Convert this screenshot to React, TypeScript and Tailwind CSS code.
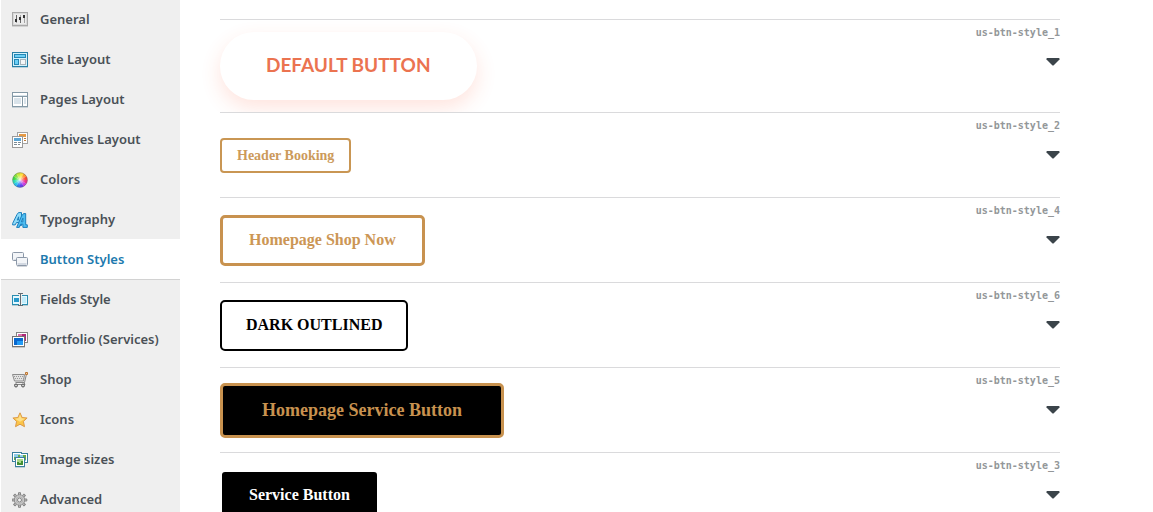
import type { ReactNode } from 'react';
import { useState } from 'react';
import clsx from 'clsx';

interface Section {
  id: string;
  title: string;
  icon: ReactNode;
}

interface ButtonStyle {
  id: number;
  label: string;
  className: string;
}

const cogTeeth = [0, 45, 90, 135, 180, 225, 270, 315];

const wheelColors = [
  '#ffe23b', '#ff9a2e', '#ff4a3a', '#f0308a', '#c63be0', '#6a3df0',
  '#2f7df5', '#25c4ee', '#2fe0b0', '#3fdc4a', '#86e03a', '#c8e838',
];

function wheelSlice(i: number) {
  const a = ((i * 30 - 90) * Math.PI) / 180;
  const b = ((i * 30 - 59) * Math.PI) / 180;
  return `M8 8 L${8 + 7.5 * Math.cos(a)} ${8 + 7.5 * Math.sin(a)} A7.5 7.5 0 0 1 ${8 + 7.5 * Math.cos(b)} ${8 + 7.5 * Math.sin(b)} Z`;
}

const sections: Section[] = [
  {
    id: 'general',
    title: 'General',
    icon: (
      <g shapeRendering="crispEdges">
        <path fill="#a9a9a9" d="M0 0h16v14H0z" />
        <path fill="#d9d9d9" d="M1 1h14v12H1z" />
        <path fill="#ececec" d="M2 2h12v10H2z" />
        <path fill="#a5a5a5" d="M4 3h1v8H4zM8 3h1v8H8zM12 3h1v8h-1z" />
        <path fill="#333" d="M3 7h2v3H3zM7 5h2v3H7zM11 3h2v3h-2z" />
        <path fill="#666" d="M4 3h1v4H4zM8 8h1v3H8z" />
        <path fill="#d2d2d2" d="M0 14h16v1H0z" />
      </g>
    ),
  },
  {
    id: 'site-layout',
    title: 'Site Layout',
    icon: (
      <g shapeRendering="crispEdges">
        <path fill="#277fa5" d="M0 0h16v15H0z" />
        <path fill="#d4f2fc" d="M1 1h14v13H1z" />
        <path fill="#2487b5" d="M2 2h12v4H2zM2 7h5v6H2z" />
        <path fill="#6ccff5" d="M3 3h10v2H3zM3 8h3v4H3z" />
        <path fill="#a9b4ba" d="M8 7h6v6H8z" />
        <path fill="#f4f6f7" d="M9 8h4v4H9z" />
        <path fill="#b9d0da" d="M0 15h16v1H0z" />
      </g>
    ),
  },
  {
    id: 'pages-layout',
    title: 'Pages Layout',
    icon: (
      <g shapeRendering="crispEdges">
        <path fill="#8499a6" d="M0 0h16v15H0z" />
        <path fill="#fff" d="M1 1h14v3H1zM1 5h9v9H1zM11 5h4v9h-4z" />
        <path fill="#d9e3ea" d="M1 3h14v1H1zM2 6h7v6H2zM12 6h2v6h-2z" />
        <path fill="#c8d1d7" d="M0 15h16v1H0z" />
      </g>
    ),
  },
  {
    id: 'archives-layout',
    title: 'Archives Layout',
    icon: (
      <g shapeRendering="crispEdges">
        <path fill="#a3a3a3" d="M5 0h11v12H5z" />
        <path fill="#fff" d="M6 1h9v10H6z" />
        <path fill="#e69a45" d="M7 2h7v3H7z" />
        <path fill="#c07a35" d="M12 6h2v1h-2zM12 8h2v1h-2z" />
        <path fill="#9a9a9a" d="M0 4h11v12H0z" />
        <path fill="#fff" d="M1 5h9v10H1z" />
        <path fill="#5aa5d5" d="M2 6h7v3H2z" />
        <path fill="#7d8b94" d="M2 10h3v1H2zM6 10h3v1H6zM2 12h3v1H2zM6 12h2v1H6z" />
      </g>
    ),
  },
  {
    id: 'colors',
    title: 'Colors',
    icon: (
      <g>
        <defs>
          <radialGradient id="wheel-glow">
            <stop offset="0" stopColor="#fff" stopOpacity=".8" />
            <stop offset=".9" stopColor="#fff" stopOpacity="0" />
          </radialGradient>
        </defs>
        {wheelColors.map((color, i) => (
          <path key={color} fill={color} d={wheelSlice(i)} />
        ))}
        <circle cx="8" cy="8" r="6" fill="url(#wheel-glow)" />
        <circle cx="8" cy="8" r="7.3" fill="none" stroke="#555" strokeOpacity=".4" />
      </g>
    ),
  },
  {
    id: 'typography',
    title: 'Typography',
    icon: (
      <g stroke="#1b7fbd" strokeLinejoin="round">
        <path
          fill="#8fdcfa"
          d="M.6 11.5 5 2.5 6.5.6h3v12.9H6.6v-3H4.5l-1.3 2.4H.6zM5.2 8h1.4V4.8z"
        />
        <path
          fill="#4fbdf0"
          d="M4.6 15.4 9.5 4l2-2.4h2.2v11.2h1.6v2.6h-4.4v-3.2H8.6l-1.3 3.2zM9.4 9.8h1.5V6.2z"
        />
      </g>
    ),
  },
  {
    id: 'button-styles',
    title: 'Button Styles',
    icon: (
      <g stroke="#8c98a8">
        <rect x=".5" y=".5" width="11" height="8" rx="1" fill="#f3f5f8" />
        <path stroke="#dce1e8" d="M1.5 7.5h9" />
        <rect x="4.5" y="5.5" width="11" height="8" rx="1" fill="#f3f5f8" />
        <path stroke="#d3d9e2" d="M5.5 11.5h9M5.5 12.5h9" />
        <path stroke="#d2d6db" d="M5 14.5h10" />
      </g>
    ),
  },
  {
    id: 'fields-style',
    title: 'Fields Style',
    icon: (
      <g shapeRendering="crispEdges">
        <path fill="#2a8db0" d="M0 3h16v10H0z" />
        <path fill="#e3f8ff" d="M1 4h14v8H1z" />
        <path fill="#2698ca" d="M2 6h5v4H2z" />
        <path fill="#c2edfb" d="M10 5h4v6h-4z" />
        <path fill="#efefef" d="M7 3h3v10H7z" />
        <path fill="#626c72" d="M8 1h1v13H8zM6 1h5v1H6zM6 13h5v1H6z" />
        <path fill="#b8cad1" d="M0 13h6v1H0zM11 13h5v1h-5z" />
      </g>
    ),
  },
  {
    id: 'portfolio',
    title: 'Portfolio (Services)',
    icon: (
      <g shapeRendering="crispEdges">
        <path fill="#858585" d="M4 0h12v11H4z" />
        <path fill="#fff" d="M5 1h10v9H5z" />
        <path fill="#b02878" d="M6 2h8v7H6z" />
        <path fill="#da70ad" d="M6 2h4v2H6z" />
        <path fill="#757575" d="M0 4h13v11H0z" />
        <path fill="#fff" d="M1 5h11v9H1z" />
        <path fill="#0868ce" d="M2 6h9v7H2z" />
        <path fill="#249bf5" d="M5 9h6v4H5z" />
        <path fill="#c8c8c8" d="M0 15h13v1H0z" />
      </g>
    ),
  },
  {
    id: 'shop',
    title: 'Shop',
    icon: (
      <g fill="none">
        <path fill="#e2e2e2" stroke="#8c8c8c" d="M.5 2.5h12l-1 6.5h-9z" />
        <path stroke="#999" strokeDasharray="1 1" d="M2 4.5h10M3 6.5h9" />
        <path stroke="#858585" d="M14.5 2l-2 8.5h-9M12 10.5l1 2H2.5" />
        <path stroke="#bd7431" fill="#f5d5a5" d="M13.5.5h2v2h-2z" />
        <circle cx="4" cy="13.5" r="1.5" fill="#ccc" stroke="#555" />
        <circle cx="11" cy="13.5" r="1.5" fill="#ccc" stroke="#555" />
      </g>
    ),
  },
  {
    id: 'icons',
    title: 'Icons',
    icon: (
      <g strokeLinejoin="round">
        <path
          fill="#fbc548"
          stroke="#dc9a48"
          d="m8 .8 2.1 4.700 5 .5-3.700 3.400 1.100 5.300L8 12.200l-4.500 2.500 1.100-5.300L.9 6l5-.5z"
        />
        <path fill="#fde08a" d="m8 2.5 1.500 3.700 3.500.5-5 3-5-3 3.500-.5z" />
      </g>
    ),
  },
  {
    id: 'image-sizes',
    title: 'Image sizes',
    icon: (
      <g shapeRendering="crispEdges">
        <path fill="#397f9d" d="M0 0h10v10H0zM6 1h10v10H6z" />
        <path fill="#fff" d="M1 1h8v8H1zM7 2h8v8H7z" />
        <path fill="#8fcce8" d="M2 2h6v6H2zM8 3h6v6H8z" />
        <path fill="#69aa4a" d="M2 5h3v3H2zM11 3h3v5h-3zM6 3h2v2H6z" />
        <path fill="#397f9d" d="M3 5h10v10H3z" />
        <path fill="#fff" d="M4 6h8v8H4z" />
        <path fill="#a9d98a" d="M5 7h6v6H5z" />
        <path fill="#438f35" d="M5 10h2v1h2V9h2v4H5z" />
        <path fill="#bfd0d6" d="M3 15h10v1H3z" />
      </g>
    ),
  },
  {
    id: 'advanced',
    title: 'Advanced',
    icon: (
      <g>
        {cogTeeth.map((angle) => (
          <path
            key={angle}
            fill="#c4c4c4"
            stroke="#858585"
            d="M6.5 3V.7h2V3"
            transform={`rotate(${angle} 7.5 8)`}
          />
        ))}
        <circle cx="7.5" cy="8" r="5.2" fill="#cfcfcf" stroke="#8c8c8c" />
        <circle cx="7.5" cy="8" r="2" fill="#efefef" stroke="#858585" />
        <circle cx="7.5" cy="8" r="3.4" fill="none" stroke="#b2b2b2" />
      </g>
    ),
  },
];

const buttonStyles: ButtonStyle[] = [
  {
    id: 1,
    label: 'DEFAULT BUTTON',
    className:
      "my-3 h-[68px] rounded-full bg-white px-[46px] pb-0.5 font-['Lato',sans-serif] text-[19px] font-bold text-[#eb7350] shadow-[0_8px_20px_rgba(255,90,50,0.16)]",
  },
  {
    id: 2,
    label: 'Header Booking',
    className:
      "h-[35px] rounded border-2 border-[#c99653] px-[15px] font-['Liberation_Serif',serif] text-[14px] font-bold text-[#cc9a5b]",
  },
  {
    id: 4,
    label: 'Homepage Shop Now',
    className:
      "h-[51px] rounded-[5px] border-3 border-[#c8924f] px-[26px] font-['Liberation_Serif',serif] text-[16px] font-bold text-[#cc9655]",
  },
  {
    id: 6,
    label: 'DARK OUTLINED',
    className:
      "h-[51px] rounded-[5px] border-2 border-black px-6 font-['Liberation_Serif',serif] text-[16px] font-bold text-black",
  },
  {
    id: 5,
    label: 'Homepage Service Button',
    className:
      "h-[55px] rounded-[5px] border-3 border-[#c8924f] bg-black px-[39px] font-['Liberation_Serif',serif] text-[18px] font-bold text-[#c8924f]",
  },
  {
    id: 3,
    label: 'Service Button',
    className:
      "h-[51px] rounded-[5px] border-2 border-white bg-black px-[27px] font-['Liberation_Serif',serif] text-[16px] font-bold text-white",
  },
];

function Sidebar({ active, onSelect }: { active: string; onSelect: (id: string) => void }) {
  return (
    <nav className="-mt-px ml-px w-[179px] shrink-0 bg-[#efefef]">
      {sections.map((section) => (
        <a
          key={section.id}
          href={`#${section.id}`}
          onClick={() => onSelect(section.id)}
          className={clsx(
            "flex h-10 items-center gap-3 pt-0.5 pl-[11px] font-['Noto_Sans',sans-serif] text-[13px] font-semibold whitespace-nowrap",
            section.id === active
              ? 'bg-white text-[#2079ae] shadow-[0_1px_0_#d2d2d2]'
              : 'text-[#4a5157]'
          )}
        >
          <svg width="16" height="16" viewBox="0 0 16 16" className="shrink-0" aria-hidden="true">
            {section.icon}
          </svg>
          {section.title}
        </a>
      ))}
    </nav>
  );
}

function StyleRow({ style }: { style: ButtonStyle }) {
  return (
    <li className="relative flex min-h-[85px] items-center justify-between border-t border-[#dadadc] bg-white">
      <button type="button" className={clsx('whitespace-nowrap', style.className)}>
        {style.label}
      </button>
      <div className="flex flex-col items-end self-start pt-[5px]">
        <span className="font-['DejaVu_Sans_Mono',monospace] text-[10px] leading-4 font-bold text-[#939799]">
          us-btn-style_{style.id}
        </span>
        <button type="button" aria-label={`Expand style ${style.id}`} className="mt-2 flex h-[26px] items-center">
          <svg width="14" height="8" viewBox="0 0 14 8" fill="#3b444a" aria-hidden="true">
            <path d="M1 0h12q1 .5.5 1.500L8 7q-1 1-2 0L.5 1.500Q0 .5 1 0z" />
          </svg>
        </button>
      </div>
    </li>
  );
}

export default function App() {
  const [active, setActive] = useState('button-styles');

  return (
    <div className="flex h-screen overflow-hidden bg-white">
      <Sidebar active={active} onSelect={setActive} />
      <main className="flex-1 px-10 pt-[19px]">
        <ul className="max-w-[840px]">
          {buttonStyles.map((style) => (
            <StyleRow key={style.id} style={style} />
          ))}
        </ul>
      </main>
    </div>
  );
}
